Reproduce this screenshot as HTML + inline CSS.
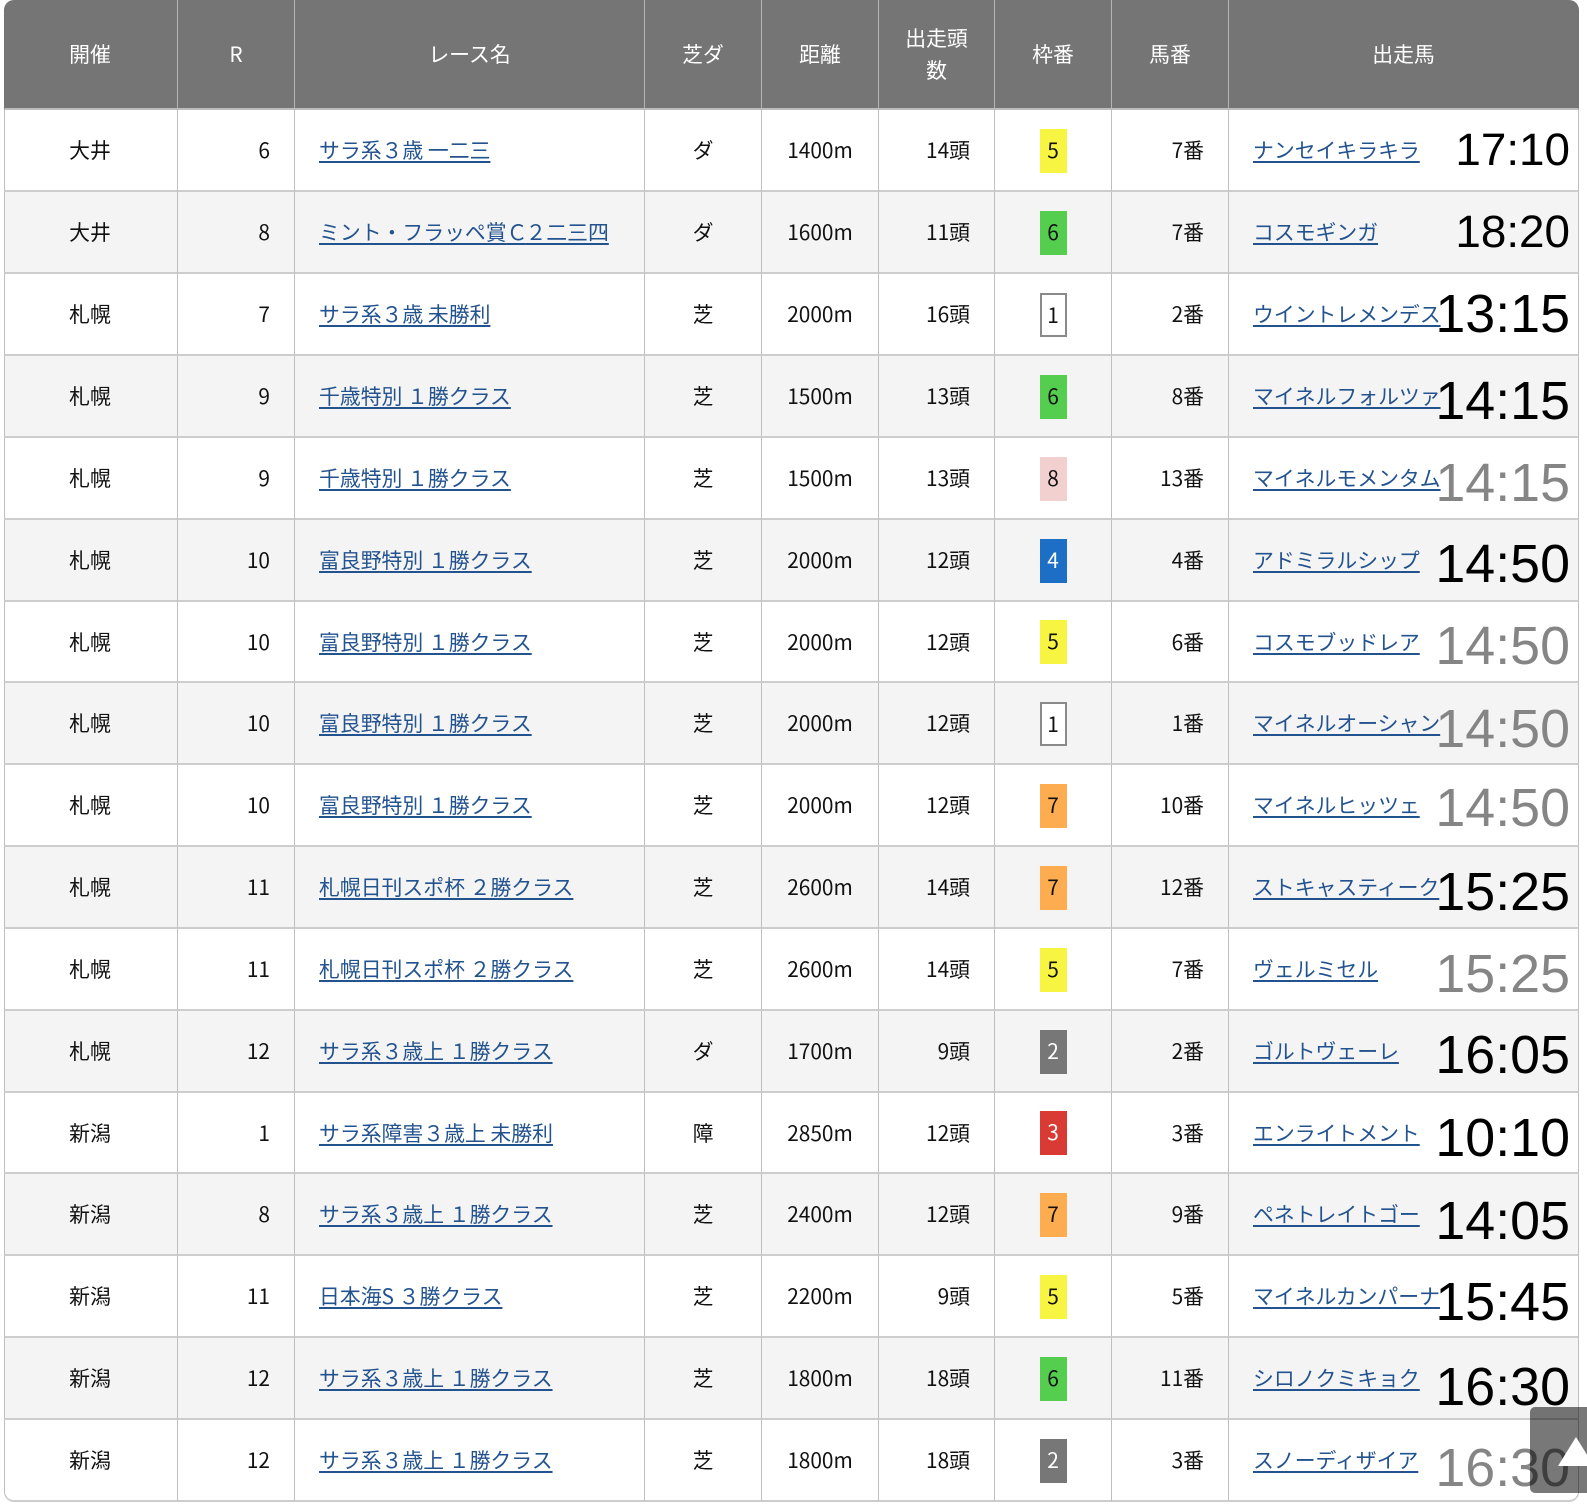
<!DOCTYPE html>
<html lang="ja">
<head>
<meta charset="utf-8">
<title>出走馬</title>
<style>
html,body{margin:0;padding:0;background:#fff;width:1587px;height:1510px;overflow:hidden}
body{position:relative;font-family:"Liberation Sans","Noto Sans CJK JP",sans-serif}
table{position:absolute;left:4px;top:0;width:1575px;table-layout:fixed;border-collapse:separate;border-spacing:0;font-family:"Noto Sans CJK JP","Liberation Sans",sans-serif;font-size:20.85px;color:#111}
th,td{box-sizing:border-box;border-left:1px solid #bfbfbf;border-bottom:2px solid #cdcdcd;vertical-align:middle;text-align:center;position:relative}
th{padding:0 0 1px}
td{padding:0}
tr>*:last-child{border-right:1px solid #bfbfbf}
th{height:110px;background:#757575;color:#fff;font-weight:400;line-height:32px;border-left-color:#b5b5b5;border-bottom-color:#bdbdbd}
th:first-child{border-top-left-radius:10px;border-left-color:#757575;padding-right:2px}
th:last-child{border-top-right-radius:10px;border-right-color:#757575}
td{height:82px;line-height:30px;background:#fff}
td:first-child{padding-right:2px}
tr.s td{height:81px}
tr.e td{background:#f4f4f4}
td.r{text-align:right;padding-right:24px}
td.l{text-align:left;padding-left:24px;white-space:nowrap}
a{color:#23538f;text-decoration:underline;text-decoration-thickness:1.5px;text-underline-offset:3px}
.b{display:block;width:27px;height:44px;line-height:43px;margin:0 auto;box-sizing:border-box;position:relative;top:.5px}
.w{background:#fff;border:2px solid #8a8a8a;line-height:40px}
.c2{background:#777;color:#fff}
.c3{background:#d93a34;color:#fff}
.c4{background:#1c6fc4;color:#fff}
.c5{background:#f8f542}
.c6{background:#55cd4f}
.c7{background:#fdac4f}
.c8{background:#f2d0d0}
.t{position:absolute;right:8px;height:80px;line-height:80px;font-family:"Liberation Sans",sans-serif;font-size:53.8px;color:#000;white-space:nowrap}
.t.m{font-size:45.8px}
.t.g{color:#858585}
.n{letter-spacing:-2px}
tbody tr:last-child td:first-child{border-bottom-left-radius:10px}
tbody tr:last-child td:last-child{border-bottom-right-radius:10px}
#top{position:absolute;left:1530px;top:1407px;width:57px;height:86px;background:rgba(0,0,0,.53);border-radius:5px 0 0 5px;overflow:hidden}
#top svg{position:absolute;left:0;top:0}
</style>
</head>
<body>
<table>
<colgroup><col style="width:173px"><col style="width:117px"><col style="width:350px"><col style="width:117px"><col style="width:117px"><col style="width:116px"><col style="width:117px"><col style="width:117px"><col style="width:351px"></colgroup>
<thead><tr><th>開催</th><th>R</th><th>レース名</th><th>芝ダ</th><th>距離</th><th>出走頭<br>数</th><th>枠番</th><th>馬番</th><th>出走馬</th></tr></thead>
<tbody>
<tr><td>大井</td><td class="r">6</td><td class="l"><a href="#">サラ系３歳 一二三</a></td><td>ダ</td><td>1400m</td><td class="r">14頭</td><td><span class="b c5">5</span></td><td class="r">7番</td><td class="l"><a href="#">ナンセイキラキラ</a><span class="t m" style="top:0px">17:10</span></td></tr>
<tr class="e"><td>大井</td><td class="r">8</td><td class="l"><a href="#">ミント・フラッペ賞<span class="n">Ｃ</span>２二三四</a></td><td>ダ</td><td>1600m</td><td class="r">11頭</td><td><span class="b c6">6</span></td><td class="r">7番</td><td class="l"><a href="#">コスモギンガ</a><span class="t m" style="top:0px">18:20</span></td></tr>
<tr><td>札幌</td><td class="r">7</td><td class="l"><a href="#">サラ系３歳 未勝利</a></td><td>芝</td><td>2000m</td><td class="r">16頭</td><td><span class="b w">1</span></td><td class="r">2番</td><td class="l"><a href="#">ウイントレメンデス</a><span class="t" style="top:0px">13:15</span></td></tr>
<tr class="e"><td>札幌</td><td class="r">9</td><td class="l"><a href="#">千歳特別 １勝クラス</a></td><td>芝</td><td>1500m</td><td class="r">13頭</td><td><span class="b c6">6</span></td><td class="r">8番</td><td class="l"><a href="#">マイネルフォルツァ</a><span class="t" style="top:5px">14:15</span></td></tr>
<tr><td>札幌</td><td class="r">9</td><td class="l"><a href="#">千歳特別 １勝クラス</a></td><td>芝</td><td>1500m</td><td class="r">13頭</td><td><span class="b c8">8</span></td><td class="r">13番</td><td class="l"><a href="#">マイネルモメンタム</a><span class="t g" style="top:5px">14:15</span></td></tr>
<tr class="e"><td>札幌</td><td class="r">10</td><td class="l"><a href="#">富良野特別 １勝クラス</a></td><td>芝</td><td>2000m</td><td class="r">12頭</td><td><span class="b c4">4</span></td><td class="r">4番</td><td class="l"><a href="#">アドミラルシップ</a><span class="t" style="top:4px">14:50</span></td></tr>
<tr class="s"><td>札幌</td><td class="r">10</td><td class="l"><a href="#">富良野特別 １勝クラス</a></td><td>芝</td><td>2000m</td><td class="r">12頭</td><td><span class="b c5">5</span></td><td class="r">6番</td><td class="l"><a href="#">コスモブッドレア</a><span class="t g" style="top:4px">14:50</span></td></tr>
<tr class="e"><td>札幌</td><td class="r">10</td><td class="l"><a href="#">富良野特別 １勝クラス</a></td><td>芝</td><td>2000m</td><td class="r">12頭</td><td><span class="b w">1</span></td><td class="r">1番</td><td class="l"><a href="#">マイネルオーシャン</a><span class="t g" style="top:6px">14:50</span></td></tr>
<tr><td>札幌</td><td class="r">10</td><td class="l"><a href="#">富良野特別 １勝クラス</a></td><td>芝</td><td>2000m</td><td class="r">12頭</td><td><span class="b c7">7</span></td><td class="r">10番</td><td class="l"><a href="#">マイネルヒッツェ</a><span class="t g" style="top:3px">14:50</span></td></tr>
<tr class="e"><td>札幌</td><td class="r">11</td><td class="l"><a href="#">札幌日刊スポ杯 ２勝クラス</a></td><td>芝</td><td>2600m</td><td class="r">14頭</td><td><span class="b c7">7</span></td><td class="r">12番</td><td class="l"><a href="#">ストキャスティーク</a><span class="t" style="top:5px">15:25</span></td></tr>
<tr><td>札幌</td><td class="r">11</td><td class="l"><a href="#">札幌日刊スポ杯 ２勝クラス</a></td><td>芝</td><td>2600m</td><td class="r">14頭</td><td><span class="b c5">5</span></td><td class="r">7番</td><td class="l"><a href="#">ヴェルミセル</a><span class="t g" style="top:5px">15:25</span></td></tr>
<tr class="e"><td>札幌</td><td class="r">12</td><td class="l"><a href="#">サラ系３歳上 １勝クラス</a></td><td>ダ</td><td>1700m</td><td class="r">9頭</td><td><span class="b c2">2</span></td><td class="r">2番</td><td class="l"><a href="#">ゴルトヴェーレ</a><span class="t" style="top:4px">16:05</span></td></tr>
<tr class="s"><td>新潟</td><td class="r">1</td><td class="l"><a href="#">サラ系障害３歳上 未勝利</a></td><td>障</td><td>2850m</td><td class="r">12頭</td><td><span class="b c3">3</span></td><td class="r">3番</td><td class="l"><a href="#">エンライトメント</a><span class="t" style="top:5px">10:10</span></td></tr>
<tr class="e"><td>新潟</td><td class="r">8</td><td class="l"><a href="#">サラ系３歳上 １勝クラス</a></td><td>芝</td><td>2400m</td><td class="r">12頭</td><td><span class="b c7">7</span></td><td class="r">9番</td><td class="l"><a href="#">ペネトレイトゴー</a><span class="t" style="top:7px">14:05</span></td></tr>
<tr><td>新潟</td><td class="r">11</td><td class="l"><a href="#">日本海S ３勝クラス</a></td><td>芝</td><td>2200m</td><td class="r">9頭</td><td><span class="b c5">5</span></td><td class="r">5番</td><td class="l"><a href="#">マイネルカンパーナ</a><span class="t" style="top:6px">15:45</span></td></tr>
<tr class="e"><td>新潟</td><td class="r">12</td><td class="l"><a href="#">サラ系３歳上 １勝クラス</a></td><td>芝</td><td>1800m</td><td class="r">18頭</td><td><span class="b c6">6</span></td><td class="r">11番</td><td class="l"><a href="#">シロノクミキョク</a><span class="t" style="top:9px">16:30</span></td></tr>
<tr><td>新潟</td><td class="r">12</td><td class="l"><a href="#">サラ系３歳上 １勝クラス</a></td><td>芝</td><td>1800m</td><td class="r">18頭</td><td><span class="b c2">2</span></td><td class="r">3番</td><td class="l"><a href="#">スノーディザイア</a><span class="t g" style="top:8px">16:30</span></td></tr>
</tbody>
</table>
<div id="top"><svg width="57" height="86" viewBox="0 0 57 86"><polygon points="46,30 28,59 64,59" fill="#fff"/></svg></div>
</body>
</html>
